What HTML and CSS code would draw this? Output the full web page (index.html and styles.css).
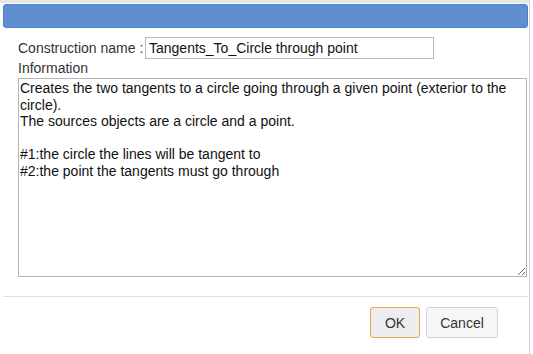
FILE: index.html
```html
<!DOCTYPE html>
<html>
<head>
<meta charset="utf-8">
<link rel="stylesheet" href="styles.css">
</head>
<body>
<div class="dialog">
  <div class="titlebar"></div>
  <div class="content">
    <div class="name-row">
      <label class="label" for="cname">Construction name :</label>
      <input id="cname" class="name-input" type="text" value="Tangents_To_Circle through point">
    </div>
    <div class="info-label">Information</div>
    <textarea class="info">Creates the two tangents to a circle going through a given point (exterior to the circle).
The sources objects are a circle and a point.

#1:the circle the lines will be tangent to
#2:the point the tangents must go through</textarea>
  </div>
  <div class="buttonpane">
    <button class="btn btn-ok">OK</button>
    <button class="btn btn-cancel">Cancel</button>
  </div>
</div>
</body>
</html>
```
FILE: styles.css
```css
html, body {
  margin: 0;
  padding: 0;
  background: #ffffff;
}
body {
  font-family: "Liberation Sans", Arial, sans-serif;
  font-size: 14px;
  color: #333333;
}
.dialog {
  width: 525px;
  height: 351px;
  border-top: 3px solid #e6e6e6;
  border-right: 1px solid #d4d4d4;
  padding: 1px 1px 0 3px;
  box-sizing: content-box;
  display: flex;
  flex-direction: column;
}
.titlebar {
  height: 22px;
  background: #608ecf;
  border: 1px solid #4a80d6;
  border-radius: 3px;
}
.content {
  padding: 9px 0 0 15px;
  display: flex;
  flex-direction: column;
}
.name-row {
  display: flex;
  align-items: center;
  height: 22px;
}
.label {
  width: 127px;
  color: #333333;
  line-height: 16px;
}
.name-input {
  width: 289px;
  height: 22px;
  box-sizing: border-box;
  border: 1px solid #b9b9b9;
  padding: 0 3px;
  margin: 0;
  font-family: "Liberation Sans", Arial, sans-serif;
  font-size: 14px;
  color: #111111;
  outline: none;
}
.info-label {
  margin-top: 1px;
  line-height: 17px;
  height: 18px;
}
.info {
  width: 509px;
  height: 199px;
  box-sizing: border-box;
  margin: 0;
  border: 1px solid #b4b4b4;
  padding: 1px 1px;
  font-family: "Liberation Sans", Arial, sans-serif;
  font-size: 14px;
  line-height: 16.5px;
  color: #111111;
  resize: both;
  outline: none;
}
.buttonpane {
  margin-top: 19px;
  border-top: 1px solid #e0e0e0;
  padding: 10px 30px 0 0;
  display: flex;
  justify-content: flex-end;
  gap: 6px;
}
.btn {
  height: 31px;
  box-sizing: border-box;
  border-radius: 3px;
  font-family: "Liberation Sans", Arial, sans-serif;
  font-size: 14px;
  color: #333333;
  padding: 0;
  margin: 0;
}
.btn-ok {
  width: 50px;
  background: #ededed;
  border: 1px solid #e8a84a;
}
.btn-cancel {
  width: 72px;
  background: #f6f6f6;
  border: 1px solid #d3d3d3;
}
```
